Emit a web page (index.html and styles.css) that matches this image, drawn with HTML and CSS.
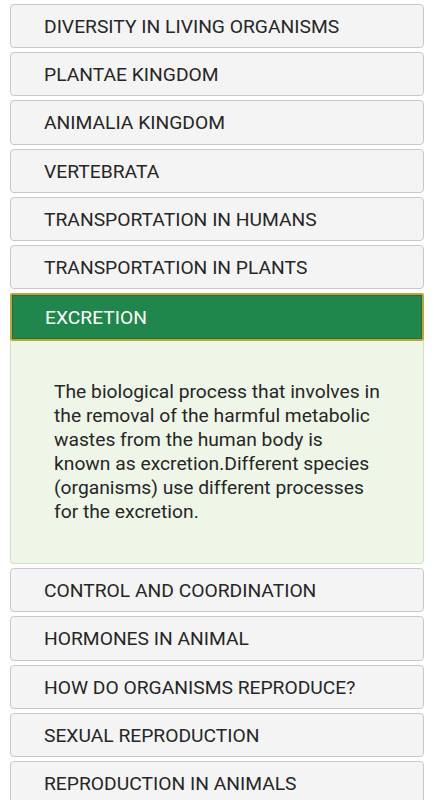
FILE: index.html
```html
<!DOCTYPE html>
<html lang="en">
<head>
    <meta charset="UTF-8">
    <meta name="viewport" content="width=device-width, initial-scale=1.0">
    <title>Biology chapters</title>
    <link rel="stylesheet" href="styles.css">
</head>
<body>
    <div class="list">
        <div class="item"></div>
        <div class="item">DIVERSITY IN LIVING ORGANISMS</div>
        <div class="item">PLANTAE KINGDOM</div>
        <div class="item">ANIMALIA KINGDOM</div>
        <div class="item">VERTEBRATA</div>
        <div class="item">TRANSPORTATION IN HUMANS</div>
        <div class="item">TRANSPORTATION IN PLANTS</div>
        <div class="item active">EXCRETION</div>
        <div class="panel">
            The biological process that involves in the removal of the harmful metabolic wastes from the human body is known as excretion.Different species (organisms) use different processes for the excretion.
        </div>
        <div class="item">CONTROL AND COORDINATION</div>
        <div class="item">HORMONES IN ANIMAL</div>
        <div class="item">HOW DO ORGANISMS REPRODUCE?</div>
        <div class="item">SEXUAL REPRODUCTION</div>
        <div class="item">REPRODUCTION IN ANIMALS</div>
    </div>
</body>
</html>
```

FILE: styles.css
```css
body{
    margin:0;
    background-color:#ffffff;
    font-family:Roboto, "Liberation Sans", sans-serif;
    color:#262626;
    overflow:hidden;
}
.list{
    padding:0 10px;
    margin-top:-44.2px;
}
.item{
    box-sizing:border-box;
    height:44.2px;
    line-height:43px;
    padding:0 33px;
    margin-bottom:4px;
    font-size:19.25px;
    background-color:#f4f4f4;
    border:1px solid #c8c8c8;
    border-radius:4px;
}
.item.active{
    height:48px;
    line-height:45px;
    margin-bottom:0;
    padding:0 33px;
    color:#ffffff;
    background-color:#1f874b;
    border:2px solid #b8a83a;
    border-radius:2px;
    box-shadow:inset 0 0 0 1px #2c6a3a;
}
.panel{
    box-sizing:border-box;
    height:223px;
    margin:0 0 4px 0;
    padding:39px 42px 0 43px;
    font-size:19.25px;
    line-height:24px;
    background-color:#eef6e8;
    border:1px solid #c6e3c5;
    border-top:none;
    border-radius:0 0 4px 4px;
}
```
